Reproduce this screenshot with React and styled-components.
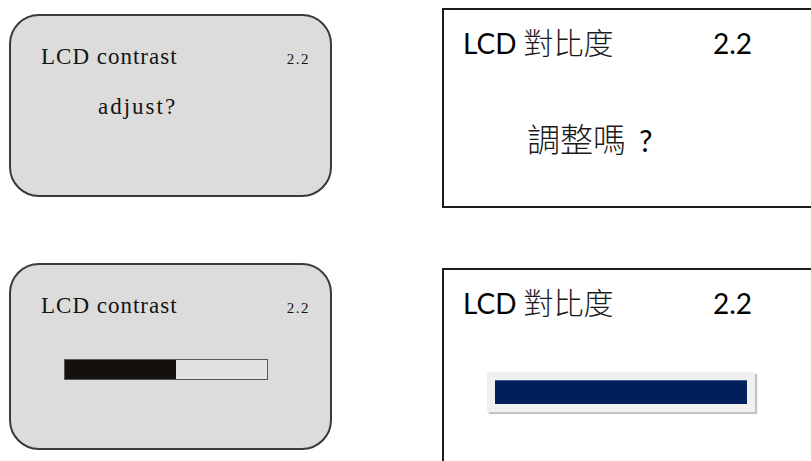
import React from "react"
import styled, { createGlobalStyle } from 'styled-components'

const GlobalStyle = createGlobalStyle`
	html, body {
		margin: 0;
		padding: 0;
		background: #ffffff;
		overflow: hidden;
	}
`

const Page = styled.div`
	display: flex;
	flex-direction: column;
	gap: 55px;
	padding: 8px 0 0 9px;
	width: 811px;
	height: 461px;
	box-sizing: border-box;
	overflow: hidden;
`

const Row = styled.div`
	display: flex;
	align-items: flex-start;
	gap: 110px;
`

const LcdPanel = styled.div`
	box-sizing: border-box;
	width: 323px;
	height: ${p => p.$height}px;
	margin-top: ${p => p.$offset || 0}px;
	padding: 29px 20px 0 30px;
	border: 2px solid #3a3a3a;
	border-radius: 30px;
	background: #dcdcdc;
	color: #141414;
	font-family: 'Liberation Serif', serif;
	flex-shrink: 0;
`

const LcdHeader = styled.div`
	display: flex;
	justify-content: space-between;
	align-items: baseline;
	line-height: 24px;
`

const LcdText = styled.span`
	font-size: ${p => p.$size || 23}px;
	letter-spacing: ${p => p.$spacing || 1}px;
	white-space: pre;
`

const LcdPrompt = styled.div`
	margin: 24px 0 0 57px;
	line-height: 24px;
`

const LcdBar = styled.div`
	box-sizing: border-box;
	display: flex;
	width: 204px;
	height: 21px;
	margin: 39px 0 0 23px;
	border: 1.5px solid #555;
	background: #e2e2e2;
`

const LcdFill = styled.div`
	background: #14100c;
	height: 100%;
`

const DocPanel = styled.div`
	box-sizing: border-box;
	width: 390px;
	height: ${p => p.$height}px;
	margin-top: ${p => p.$offset || 0}px;
	padding: 13px 0 0 19px;
	border: 2px solid #1c1c1c;
	background: #ffffff;
	color: #000;
	flex-shrink: 0;
`

const DocHeader = styled.div`
	display: grid;
	grid-template-columns: 250px auto;
	align-items: baseline;
	font-family: 'Lato', 'Noto Sans CJK TC', sans-serif;
	font-size: 28px;
	line-height: 36px;
`

const Cjk = styled.span`
	font-family: 'Noto Sans CJK TC', sans-serif;
	font-weight: 200;
	font-size: ${p => p.$size || 30}px;
	color: #1a1a1a;
`

const DocPrompt = styled.div`
	margin: 59px 0 0 64px;
	font-family: 'Lato', 'Noto Sans CJK TC', sans-serif;
	font-size: 30px;
	line-height: 36px;
`

const Question = styled.span`
	margin-left: 13px;
`

const DocBarFrame = styled.div`
	box-sizing: border-box;
	width: 268px;
	height: 40px;
	margin: 51px 0 0 24px;
	padding: 8px;
	background: #f0f0f0;
	box-shadow: 2px 2px 1px #c4c4c4;
`

const DocBarFill = styled.div`
	height: 100%;
	background: #001f5b;
	border-top: 1px solid #4a5f90;
	box-sizing: border-box;
`

function ContrastLcd({ height, offset, children }) {
	return (
		<LcdPanel $height={height} $offset={offset}>
			<LcdHeader>
				<LcdText>LCD contrast</LcdText>
				<LcdText $size={15} $spacing={1.5}>2.2</LcdText>
			</LcdHeader>
			{children}
		</LcdPanel>
	)
}

function ContrastDoc({ height, offset, children }) {
	return (
		<DocPanel $height={height} $offset={offset}>
			<DocHeader>
				<span>LCD <Cjk>對比度</Cjk></span>
				<span>2.2</span>
			</DocHeader>
			{children}
		</DocPanel>
	)
}

export default function App() {
	const level = 55
	return (
		<>
			<GlobalStyle />
			<Page>
				<Row>
					<ContrastLcd height={183} offset={6}>
						<LcdPrompt><LcdText $spacing={2}>adjust?</LcdText></LcdPrompt>
					</ContrastLcd>
					<ContrastDoc height={200}>
						<DocPrompt><Cjk $size={33}>調整嗎</Cjk><Question>?</Question></DocPrompt>
					</ContrastDoc>
				</Row>
				<Row>
					<ContrastLcd height={187}>
						<LcdBar>
							<LcdFill style={{ width: `${level}%` }} />
						</LcdBar>
					</ContrastLcd>
					<ContrastDoc height={220} offset={5}>
						<DocBarFrame>
							<DocBarFill />
						</DocBarFrame>
					</ContrastDoc>
				</Row>
			</Page>
		</>
	)
}
